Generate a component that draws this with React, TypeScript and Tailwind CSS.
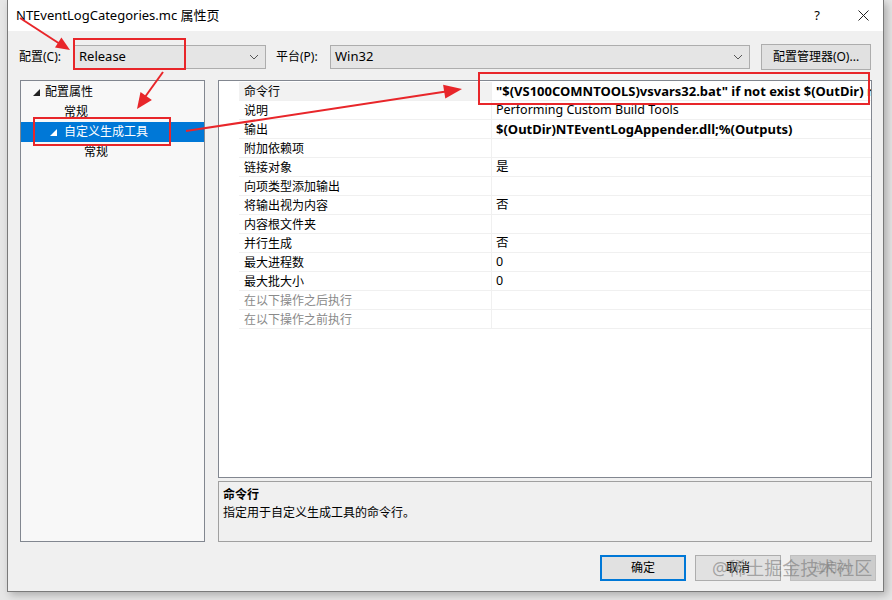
import React from 'react';

const FONT = { fontFamily: '"Noto Sans", "Noto Sans CJK SC", sans-serif' };

type Row = { name: string; value?: string; bold?: boolean; dim?: boolean };

const rows: Row[] = [
  { name: '命令行', value: '"$(VS100COMNTOOLS)vsvars32.bat" if not exist $(OutDir) md $(OutDir)', bold: true },
  { name: '说明', value: 'Performing Custom Build Tools' },
  { name: '输出', value: '$(OutDir)NTEventLogAppender.dll;%(Outputs)', bold: true },
  { name: '附加依赖项' },
  { name: '链接对象', value: '是' },
  { name: '向项类型添加输出' },
  { name: '将输出视为内容', value: '否' },
  { name: '内容根文件夹' },
  { name: '并行生成', value: '否' },
  { name: '最大进程数', value: '0' },
  { name: '最大批大小', value: '0' },
  { name: '在以下操作之后执行', dim: true },
  { name: '在以下操作之前执行', dim: true },
];

function Chevron() {
  return (
    <svg width="10" height="6" viewBox="0 0 10 6" className="shrink-0">
      <path d="M1 1 L5 5 L9 1" fill="none" stroke="#555" strokeWidth="1" />
    </svg>
  );
}

function Expander({ white }: { white?: boolean }) {
  return (
    <svg width="7" height="7" viewBox="0 0 7 7" className="shrink-0">
      <polygon points="7,0 7,7 0,7" fill={white ? '#fff' : '#222'} />
    </svg>
  );
}

function Annotations() {
  return (
    <svg className="absolute inset-0 pointer-events-none" width="892" height="600">
      <rect x="74" y="39" width="111" height="30" fill="none" stroke="#e8262a" strokeWidth="2" />
      <rect x="34" y="118" width="136" height="27" fill="none" stroke="#e8262a" strokeWidth="2" />
      <rect x="479" y="73" width="390" height="31" fill="none" stroke="#e8262a" strokeWidth="2" />
      <line x1="20" y1="18" x2="60" y2="44" stroke="#e8262a" strokeWidth="2" />
      <polygon points="70,50 55,47.6 61.4,37.4" fill="#e8262a" />
      <line x1="163" y1="72" x2="145" y2="97" stroke="#e8262a" strokeWidth="2" />
      <polygon points="137,109 140.5,91.9 151.9,99.9" fill="#e8262a" />
      <line x1="186" y1="131" x2="446" y2="91.5" stroke="#e8262a" strokeWidth="2" />
      <polygon points="462,89 445.3,98.6 443.1,84.8" fill="#e8262a" />
    </svg>
  );
}

export default function App() {
  return (
    <div className="relative w-[892px] h-[600px] overflow-hidden bg-[#e6e6e6] text-[12px] text-black" style={FONT}>
      <div className="ml-[7px] w-[877px] h-[592px] flex flex-col bg-[#f0f0f0] border-x border-b border-[#7a7a7a] shadow-[3px_3px_8px_rgba(0,0,0,0.25)]">
        {/* title bar */}
        <div className="h-[31px] bg-white flex items-center pl-[8px] pr-[14px] shrink-0">
          <span className="text-[13px] leading-none">NTEventLogCategories.mc 属性页</span>
          <span className="ml-auto text-[13px] leading-none mr-[38px]">?</span>
          <svg width="11" height="11" viewBox="0 0 11 11">
            <path d="M0.5 0.5 L10.5 10.5 M10.5 0.5 L0.5 10.5" stroke="#222" strokeWidth="1" />
          </svg>
        </div>

        {/* config row */}
        <div className="mt-[13px] h-[26px] flex items-center pl-[11px] pr-[12px] shrink-0">
          <span className="w-[55px] shrink-0">配置(C):</span>
          <div className="w-[192px] shrink-0 h-[24px] flex items-center bg-[#e5e5e5] border border-[#adadad] pl-[4px] pr-[6px]">
            <span className="flex-1 text-[13px]">Release</span>
            <Chevron />
          </div>
          <span className="ml-[10px] w-[54px] shrink-0">平台(P):</span>
          <div className="w-[420px] shrink-0 h-[24px] flex items-center bg-[#e5e5e5] border border-[#adadad] pl-[4px] pr-[6px]">
            <span className="flex-1 text-[13px]">Win32</span>
            <Chevron />
          </div>
          <div className="ml-auto w-[110px] shrink-0 h-[26px] flex items-center justify-center bg-[#e1e1e1] border border-[#adadad]">
            配置管理器(O)...
          </div>
        </div>

        {/* main area */}
        <div className="mt-[10px] flex pl-[12px] pr-[11px] gap-[13px] h-[462px] shrink-0">
          {/* tree */}
          <div className="w-[185px] shrink-0 border border-[#828790] bg-[#f8f8f8] pt-[1px]">
            <div className="h-[20px] flex items-center pl-[12px] gap-[5px]">
              <Expander />
              <span>配置属性</span>
            </div>
            <div className="h-[20px] flex items-center pl-[43px]">常规</div>
            <div className="h-[20px] flex items-center pl-[29px] gap-[7px] bg-[#0078d7] text-white">
              <Expander white />
              <span>自定义生成工具</span>
            </div>
            <div className="h-[20px] flex items-center pl-[63px]">常规</div>
          </div>

          {/* property grid + description */}
          <div className="flex-1 min-w-0 flex flex-col">
            <div className="h-[398px] border border-[#828790] bg-white flex pt-[1px]">
              <div className="w-[20px] bg-white shrink-0" />
              <div className="flex-1 min-w-0">
                {rows.map((r, i) => (
                  <div key={i} className="h-[19px] flex border-b border-[#f0f0f0]">
                    <div
                      className={
                        'w-[253px] shrink-0 pl-[5px] pt-[1px] flex items-center border-r border-[#f0f0f0] ' +
                        (i === 0 ? 'bg-[#f2f2f2] ' : '') +
                        (r.dim ? 'text-[#8a8a8a]' : '')
                      }
                    >
                      {r.name}
                    </div>
                    <div
                      className={
                        'flex-1 min-w-0 pl-[4px] pt-[1px] flex items-center overflow-hidden whitespace-nowrap ' +
                        (r.bold ? 'font-bold text-[13px]' : 'text-[12.5px]')
                      }
                    >
                      {r.value}
                    </div>
                  </div>
                ))}
              </div>
            </div>
            <div className="mt-[3px] h-[61px] border border-[#a0a0a0] bg-[#f0f0f0] pl-[4px] pt-[4px] leading-[18px]">
              <div className="font-bold">命令行</div>
              <div>指定用于自定义生成工具的命令行。</div>
            </div>
          </div>
        </div>

        {/* buttons */}
        <div className="mt-[13px] flex justify-end gap-[9px] pr-[7px]">
          <div className="w-[86px] h-[26px] flex items-center justify-center bg-[#e1e1e1] border-2 border-[#0078d7]">确定</div>
          <div className="w-[86px] h-[26px] flex items-center justify-center bg-[#e1e1e1] border border-[#adadad]">取消</div>
          <div className="w-[86px] h-[26px] flex items-center justify-center bg-[#cccccc] border border-[#bfbfbf] text-[#a0a0a0]">应用(A)</div>
        </div>
      </div>

      <div className="absolute left-[712px] top-[559px] text-[18px] leading-none text-[rgba(110,110,110,0.55)] pointer-events-none">
        @稀土掘金技术社区
      </div>

      <Annotations />
    </div>
  );
}
